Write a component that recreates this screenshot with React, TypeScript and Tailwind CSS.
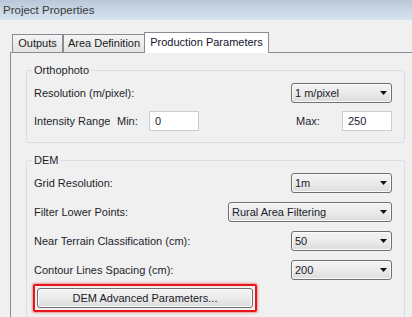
const font = "font-['Liberation_Sans',Arial,sans-serif]";

function Select({ value, width }: { value: string; width: string }) {
  return (
    <div
      className={`${width} h-5 flex items-center justify-between rounded-[3px] border border-[#707070] bg-gradient-to-b from-[#f3f3f3] via-[#ebebeb] to-[#dcdcdc] pl-[3px] pr-[4px] text-[11px] text-[#1a1a2a] shadow-[inset_0_0_0_1px_#fafafa]`}
    >
      <span className="leading-none">{value}</span>
      <svg width="7" height="4" viewBox="0 0 7 4">
        <path d="M0 0 L7 0 L3.5 4 Z" fill="#111" />
      </svg>
    </div>
  );
}

function TextBox({ value }: { value: string }) {
  return (
    <div className="w-[50px] h-5 flex items-center border border-[#c9ced4] bg-white pl-[5px] text-[11px] text-[#1a1a2a]">
      {value}
    </div>
  );
}

function Row({ label, children }: { label: string; children: React.ReactNode }) {
  return (
    <div className="h-5 flex items-center justify-between">
      <span className="text-[11px] text-[#1e1e2a]">{label}</span>
      {children}
    </div>
  );
}

function GroupBox({ title, className, children }: { title: string; className?: string; children: React.ReactNode }) {
  return (
    <div className={`relative w-[379px] rounded-[3px] border border-[#d5dfe5] pl-[7px] pr-[12px] ${className ?? ''}`}>
      <span className="absolute -top-[8px] left-[5px] bg-[#f0f0f0] px-[2px] text-[11px] leading-[14px] text-[#1e1e2a]">
        {title}
      </span>
      {children}
    </div>
  );
}

export default function App() {
  return (
    <div className={`w-[412px] h-[317px] overflow-hidden bg-[#f0f0f0] ${font}`}>
      <div className="h-5 bg-gradient-to-b from-[#b9c8d8] to-[#d8e5f2] pl-[3px] text-[11.5px] leading-5 text-[#3a3a3a]">
        Project Properties
      </div>

      <div className="pl-[10px] pt-[12px]">
        {/* tabs */}
        <div className="relative z-10 flex h-5 items-end pl-[2px] text-[11px]">
          <div className="flex h-[18px] w-[51px] items-center justify-center border border-b-0 border-[#898c95] bg-gradient-to-b from-[#f4f4f4] to-[#e4e4e4] text-[#1a1a1a]">
            Outputs
          </div>
          <div className="flex h-[18px] w-[82px] items-center justify-center border border-b-0 border-[#898c95] bg-gradient-to-b from-[#f4f4f4] to-[#e4e4e4] text-[#1a1a1a]">
            Area Definition
          </div>
          <div className="-mb-px -ml-px flex h-[21px] w-[125px] items-center justify-center border border-b-0 border-[#898c95] bg-white pb-[2px] text-[#14142e]">
            Production Parameters
          </div>
        </div>

        {/* tab page */}
        <div className="h-[300px] w-[420px] border-l border-t border-[#898c95] bg-[#f0f0f0] pl-[15px] pt-[17px]">
          <GroupBox title="Orthophoto" className="pt-[12px] pb-[11px]">
            <div className="flex flex-col gap-[8px]">
              <Row label="Resolution (m/pixel):">
                <Select value="1 m/pixel" width="w-[101px]" />
              </Row>
              <div className="flex h-5 items-center text-[11px] text-[#1e1e2a]">
                <span className="w-[83px]">Intensity Range</span>
                <span className="w-[32px]">Min:</span>
                <TextBox value="0" />
                <span className="ml-auto w-[46px]">Max:</span>
                <TextBox value="250" />
              </div>
            </div>
          </GroupBox>

          <GroupBox title="DEM" className="mt-[17px] pt-[12px] pb-[20px]">
            <div className="flex flex-col gap-[9px]">
              <Row label="Grid Resolution:">
                <Select value="1m" width="w-[101px]" />
              </Row>
              <Row label="Filter Lower Points:">
                <Select value="Rural Area Filtering" width="w-[164px]" />
              </Row>
              <Row label="Near Terrain Classification (cm):">
                <Select value="50" width="w-[101px]" />
              </Row>
              <Row label="Contour Lines Spacing (cm):">
                <Select value="200" width="w-[101px]" />
              </Row>
            </div>
            <div className="-ml-px mt-[4px] w-[224px] rounded-[2px] border-2 border-[#e5161c] p-[2px] shadow-[0_0_2px_1px_rgba(230,40,40,0.45)]">
              <div className="flex h-5 items-center justify-center rounded-[3px] border border-[#707070] bg-gradient-to-b from-[#f3f3f3] via-[#ebebeb] to-[#dcdcdc] text-[11px] text-[#1a1a2a] shadow-[inset_0_0_0_1px_#fafafa]">
                DEM Advanced Parameters...
              </div>
            </div>
          </GroupBox>
        </div>
      </div>
    </div>
  );
}
